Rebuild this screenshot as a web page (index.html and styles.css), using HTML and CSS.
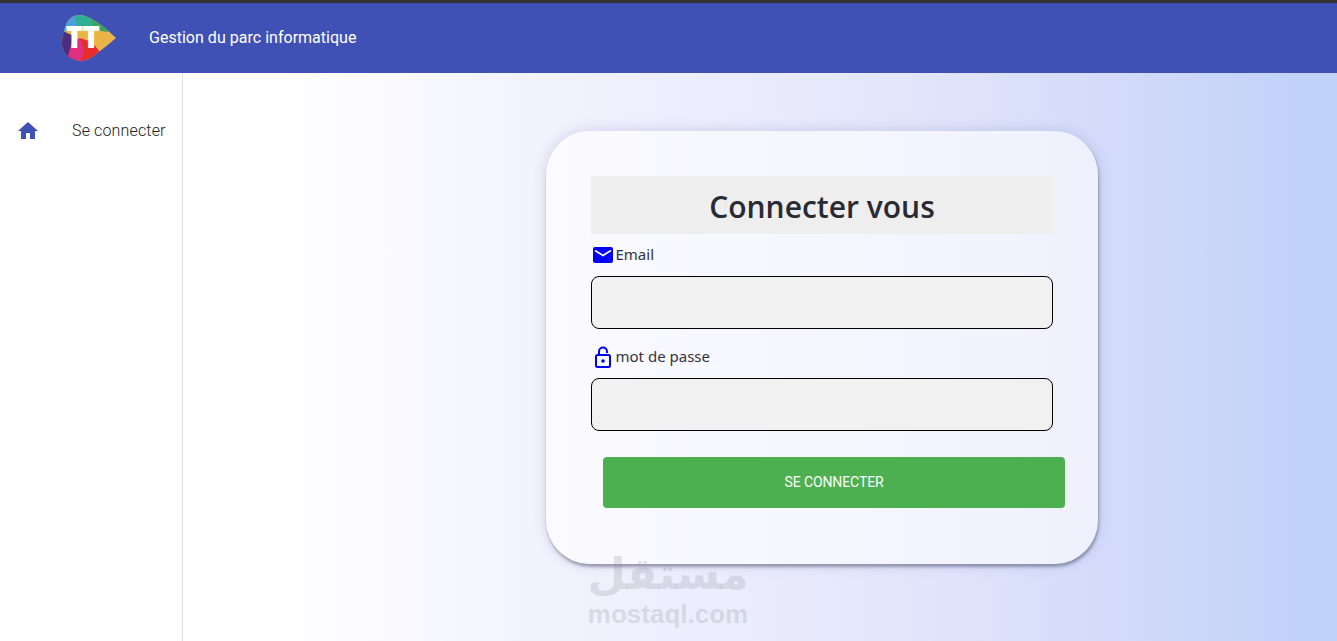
FILE: index.html
```html
<!DOCTYPE html>
<html lang="fr">
<head>
<meta charset="utf-8">
<title>Gestion du parc informatique</title>
<link rel="stylesheet" href="styles.css">
</head>
<body>
<header class="topbar">
  <svg class="logo" viewBox="60 13 58 50" width="58" height="50" aria-label="Logo">
    <defs><clipPath id="blob"><path d="M116 38C108 30 96 20 85 16C77 13 69 17 66 25C63 32 62 38 62 44C62 52 68 58 76 60C84 62 90 59 96 54C104 48 110 43 116 38Z"/></clipPath></defs>
    <g clip-path="url(#blob)">
      <rect x="60" y="13" width="58" height="50" fill="#eab547"/>
      <path d="M60 13H76L78 30L60 32Z" fill="#4a9fd8"/>
      <path d="M74 13H92L94 28L78 30Z" fill="#2fae94"/>
      <path d="M90 13H118L108 32L94 30Z" fill="#3ba559"/>
      <path d="M60 30L74 36L73 63H60Z" fill="#4a2f7f"/>
      <path d="M72 42L80 38L88 46L86 63H66Z" fill="#e22f80"/>
      <path d="M80 38L92 42L100 52L88 63H80L84 50Z" fill="#e52d2d"/>
    </g>
    <text class="logo-text" x="65.500" y="48">TT</text>
  </svg>
  <span class="app-title">Gestion du parc informatique</span>
</header>
<div class="layout">
  <nav class="sidebar">
    <a class="nav-item">
      <svg class="home" viewBox="0 0 24 24" width="24" height="24"><path d="M10 20v-6h4v6h5v-8h3L12 3 2 12h3v8z"/></svg>
      <span class="nav-label">Se connecter</span>
    </a>
  </nav>
  <main class="content">
    <section class="card">
      <h1 class="card-title">Connecter vous</h1>
      <div class="label-row">
        <svg class="field-icon" viewBox="0 0 20 16" width="20" height="16"><rect width="20" height="16" rx="2" fill="#0000ff"/><path d="M2 3.500L10 8.500L18 3.500" fill="none" stroke="#fff" stroke-width="1.600"/></svg>
        <label class="field-label">Email</label>
      </div>
      <input class="field" type="text">
      <div class="label-row second">
        <svg class="field-icon lock" viewBox="0 0 20 22" width="20" height="22"><path d="M6 9V5.500a4 4 0 0 1 8 0V7" fill="none" stroke="#0000ff" stroke-width="2"/><rect x="3" y="9" width="14" height="12" rx="1.500" fill="none" stroke="#0000ff" stroke-width="2"/><circle cx="10" cy="15" r="1.800" fill="#0000ff"/></svg>
        <label class="field-label">mot de passe</label>
      </div>
      <input class="field" type="password">
      <button class="submit" type="button">SE CONNECTER</button>
    </section>
    <div class="watermark">
      <div class="wm-ar" lang="ar" dir="rtl">مستقل</div>
      <div class="wm-en">mostaql.com</div>
    </div>
  </main>
</div>
</body>
</html>
```
FILE: styles.css
```css
* { box-sizing: border-box; }
html, body { margin: 0; height: 100%; overflow: hidden; }
body {
  display: flex;
  flex-direction: column;
  font-family: Roboto, sans-serif;
  background: #fff;
}
.topbar {
  height: 73px;
  flex: none;
  display: flex;
  align-items: center;
  background: #3f51b5;
  border-top: 3px solid #333;
  color: #fff;
  padding-left: 60px;
}
.logo { display: block; margin-right: 31px; }
.logo-text {
  font-family: "Open Sans", sans-serif;
  font-weight: 800;
  font-size: 30px;
  letter-spacing: -1px;
  fill: #fff;
}
.app-title { font-size: 16px; letter-spacing: .02px; line-height: 20px; }
.layout { flex: 1; display: flex; min-height: 0; }
.sidebar {
  width: 183px;
  flex: none;
  border-right: 1px solid #dcdde8;
  padding-top: 46px;
}
.nav-item {
  display: flex;
  align-items: center;
  height: 24px;
  padding-left: 16px;
  gap: 32px;
  font-size: 16px;
  font-weight: 300;
  color: #212121;
}
.nav-label { letter-spacing: .15px; padding-bottom: 2px; }
.home { fill: #3f51b5; flex: none; }
.content {
  flex: 1;
  position: relative;
  padding: 58px 0 0 363px;
  background: linear-gradient(90deg, #fff 8%, #f3f3fe 30%, #e9ebfc 52%, #dfe3fb 68%, #d0d9f9 84%, #c1d2f9 97%);
}
.card {
  width: 552px;
  height: 433px;
  padding: 45px 45px 0;
  border-radius: 44px;
  background: rgba(255, 255, 255, .6);
  box-shadow: 1px 3px 3px rgba(70, 70, 100, .45), 0 0 14px rgba(70, 80, 150, .22);
}
.card-title {
  margin: 0;
  height: 58px;
  line-height: 62px;
  width: 462px;
  text-align: center;
  background: #eee;
  font-family: "Open Sans", sans-serif;
  font-size: 30px;
  font-weight: 600;
  color: #2a2a33;
}
.label-row {
  display: flex;
  align-items: center;
  height: 22px;
  margin-top: 10px;
  margin-bottom: 10px;
  padding-left: 2px;
  gap: 3px;
  font-family: "Noto Sans", sans-serif;
  font-size: 15px;
  color: #33333f;
}
.field-label { padding-bottom: 2px; margin-left: -.5px; }
.label-row.second { margin-top: 17px; margin-bottom: 10px; }
.field-icon { flex: none; }
.field {
  display: block;
  width: 462px;
  height: 53px;
  border: 1px solid #000;
  border-radius: 8px;
  background: #f1f1f1;
  padding: 0;
}
.submit {
  display: block;
  width: 462px;
  height: 51px;
  margin: 26px 0 0 12px;
  padding: 0 0 2px;
  border: 0;
  border-radius: 4px;
  background: #4caf50;
  color: #fff;
  font-family: Roboto, sans-serif;
  font-size: 14px;
  font-weight: 400;
  letter-spacing: -.1px;
}
.watermark {
  position: absolute;
  left: 404px;
  top: 475px;
  width: 162px;
  text-align: center;
  color: rgba(120, 120, 130, .2);
  font-weight: 700;
}
.wm-ar {
  font-family: "DejaVu Sans", sans-serif;
  font-size: 44px;
  line-height: 51px;
  white-space: nowrap;
}
.wm-en { font-family: "Liberation Sans", sans-serif; font-size: 26px; line-height: 30px; }
```
